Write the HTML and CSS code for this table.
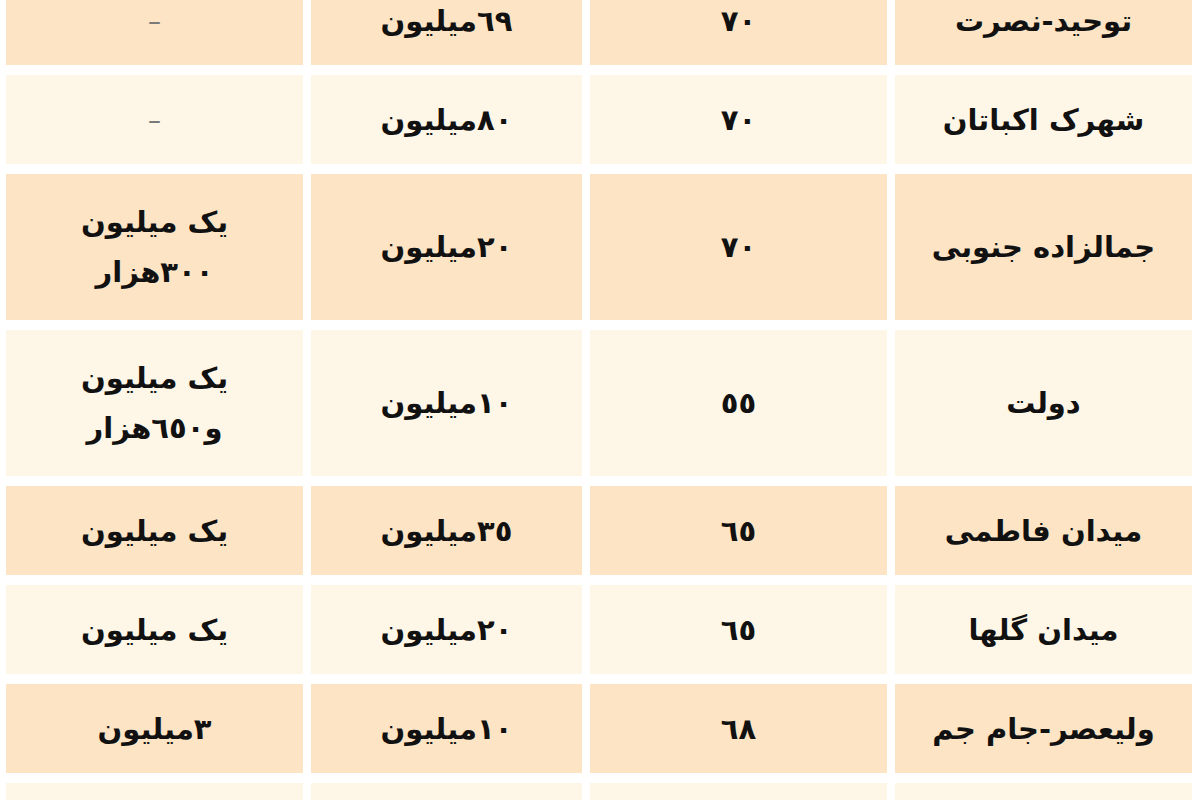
FILE: index.html
```html
<!DOCTYPE html>
<html lang="fa" dir="rtl">
<head>
<meta charset="utf-8">
<title>جدول قیمت</title>
<link rel="stylesheet" href="styles.css">
</head>
<body>
<div class="table">
  <div class="cell tan">توحید-نصرت</div>
  <div class="cell tan">٧٠</div>
  <div class="cell tan">٦٩میلیون</div>
  <div class="cell tan dash">–</div>

  <div class="cell cream">شهرک اکباتان</div>
  <div class="cell cream">٧٠</div>
  <div class="cell cream">٨٠میلیون</div>
  <div class="cell cream dash">–</div>

  <div class="cell tan">جمالزاده جنوبی</div>
  <div class="cell tan">٧٠</div>
  <div class="cell tan">٢٠میلیون</div>
  <div class="cell tan">یک میلیون<br>٣٠٠هزار</div>

  <div class="cell cream">دولت</div>
  <div class="cell cream">٥٥</div>
  <div class="cell cream">١٠میلیون</div>
  <div class="cell cream">یک میلیون<br>و٦٥٠هزار</div>

  <div class="cell tan">میدان فاطمی</div>
  <div class="cell tan">٦٥</div>
  <div class="cell tan">٣٥میلیون</div>
  <div class="cell tan">یک میلیون</div>

  <div class="cell cream">میدان گلها</div>
  <div class="cell cream">٦٥</div>
  <div class="cell cream">٢٠میلیون</div>
  <div class="cell cream">یک میلیون</div>

  <div class="cell tan">ولیعصر-جام جم</div>
  <div class="cell tan">٦٨</div>
  <div class="cell tan">١٠میلیون</div>
  <div class="cell tan">٣میلیون</div>

  <div class="cell cream">گیشا</div>
  <div class="cell cream">٧٥</div>
  <div class="cell cream">١٥میلیون</div>
  <div class="cell cream">یک میلیون</div>
</div>
</body>
</html>
```
FILE: styles.css
```css
html, body {
  margin: 0;
  padding: 0;
  background: #ffffff;
  overflow: hidden;
}

body {
  font-family: "DejaVu Sans", "Noto Sans", sans-serif;
  color: #111111;
}

.table {
  display: grid;
  grid-template-columns: 297px 297px 271px 297px;
  grid-template-rows: 89px 89px 146px 146px 89px 89px 89px 89px;
  column-gap: 8px;
  row-gap: 10px;
  margin-top: -24px;
  padding-right: 8px;
  padding-left: 5px;
}

.cell {
  display: flex;
  align-items: center;
  justify-content: center;
  text-align: center;
  font-size: 29px;
  font-weight: bold;
  line-height: 50px;
}

.tan {
  background: #fce4c4;
}

.cream {
  background: #fef6e7;
}

.dash {
  color: #7a7a7a;
  font-weight: normal;
  font-size: 26px;
}
```
